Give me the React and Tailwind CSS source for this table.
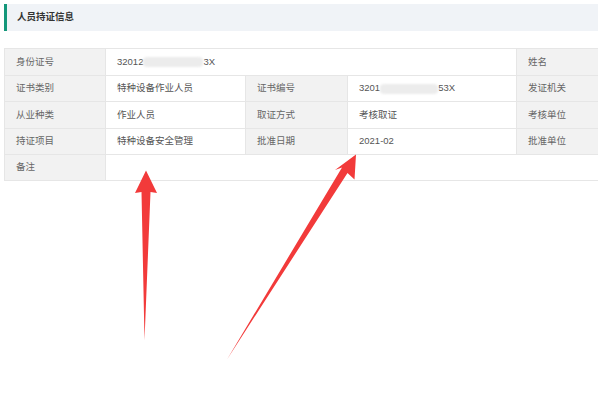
import React from "react";

const font = { fontFamily: '"Liberation Sans", "Noto Sans CJK SC", sans-serif' };

const Label = ({ children }) => (
  <td className="bg-[#f2f2f2] border border-[#e6e6e6] pl-[11px] text-[#666] align-middle">{children}</td>
);

const Value = ({ children, colSpan }) => (
  <td colSpan={colSpan} className="bg-white border border-[#e6e6e6] pl-[11px] text-[#555] align-middle">{children}</td>
);

const Blur = ({ w }) => (
  <span className="inline-block align-middle h-[10px] bg-[#ececec] blur-[1px] rounded-sm" style={{ width: w }} />
);

export default function App() {
  return (
    <div className="relative w-[598px] h-[400px] bg-white overflow-hidden" style={font}>
      <div className="mt-1 ml-1 h-[27px] bg-[#f0f3f7] border-l-[3px] border-[#14977a] flex items-center pl-[10px]">
        <span className="text-[9.5px] font-bold text-[#333]">人员持证信息</span>
      </div>

      <table className="mt-[17px] ml-1 border-collapse table-fixed w-[594px] text-[9.5px]">
        <colgroup>
          <col className="w-[101px]" />
          <col className="w-[140px]" />
          <col className="w-[102px]" />
          <col className="w-[169px]" />
          <col className="w-[82px]" />
        </colgroup>
        <tbody>
          <tr className="h-[26.5px]">
            <Label>身份证号</Label>
            <Value colSpan={3}>32012<Blur w={60} />3X</Value>
            <Label>姓名</Label>
          </tr>
          <tr className="h-[26.5px]">
            <Label>证书类别</Label>
            <Value>特种设备作业人员</Value>
            <Label>证书编号</Label>
            <Value>3201<Blur w={58} />53X</Value>
            <Label>发证机关</Label>
          </tr>
          <tr className="h-[26.5px]">
            <Label>从业种类</Label>
            <Value>作业人员</Value>
            <Label>取证方式</Label>
            <Value>考核取证</Value>
            <Label>考核单位</Label>
          </tr>
          <tr className="h-[26.5px]">
            <Label>持证项目</Label>
            <Value>特种设备安全管理</Value>
            <Label>批准日期</Label>
            <Value>2021-02</Value>
            <Label>批准单位</Label>
          </tr>
          <tr className="h-[26px]">
            <Label>备注</Label>
            <Value colSpan={4}></Value>
          </tr>
        </tbody>
      </table>

      <svg className="absolute left-0 top-0 pointer-events-none" width="598" height="400" viewBox="0 0 598 400">
        <polygon points="146,170.5 157,193 150.5,192 144.5,340 141.5,192 135,193" fill="#f23a3a" />
        <polygon points="356,154.5 354.5,179.5 347.5,173 227,359.5 342,167.5 335,170" fill="#f23a3a" />
      </svg>
    </div>
  );
}
